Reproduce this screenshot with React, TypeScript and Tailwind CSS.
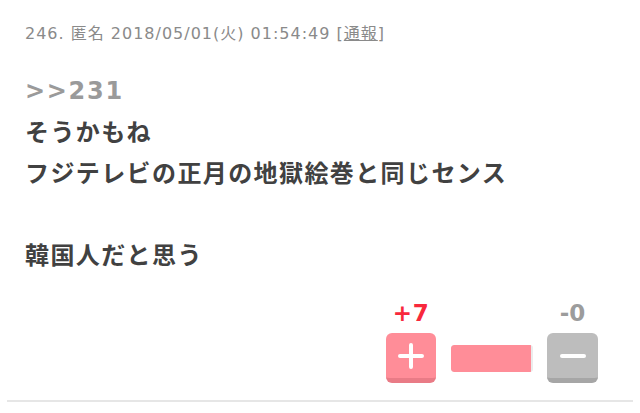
export default function App() {
  const latin = { fontFamily: '"DejaVu Sans", "Noto Sans CJK JP", sans-serif' };
  const body = { fontFamily: '"Noto Sans CJK JP", sans-serif' };
  const up = 7;
  const down = 0;
  const ratio = up + down === 0 ? 0.5 : up / (up + down);

  return (
    <div className="w-[640px] h-[413px] bg-white overflow-hidden">
      <div className="mx-[7px] border-b-2 border-[#e6e6e6] pb-[17px]">
        <div
          className="pl-[18px] pt-[24px] text-[16px] leading-[20px] text-[#8a8a8a] tracking-[1px] whitespace-nowrap"
          style={latin}
        >
          246. 匿名 2018/05/01(火) 01:54:49 [<span className="underline">通報</span>]
        </div>

        <div
          className="pl-[18px] mt-[25px] text-[24px] leading-[41px] font-bold text-[#414141] tracking-[1.4px]"
          style={body}
        >
          <div className="text-[#9a9a9a] tracking-[1.7px] pt-[2px] -mb-[2px]" style={latin}>
            &gt;&gt;231
          </div>
          <div>そうかもね</div>
          <div>フジテレビの正月の地獄絵巻と同じセンス</div>
          <div className="h-[41px]" />
          <div>韓国人だと思う</div>
        </div>

        <div className="mt-[28px] flex justify-end items-end pr-[35px]">
          <div className="flex flex-col items-center w-[50px]">
            <div
              className="text-[23px] leading-[22px] font-bold text-[#f8283c] mb-[9px] pt-[2px] -mt-[2px] tracking-[0.5px]"
              style={latin}
            >
              +{up}
            </div>
            <button className="w-[50px] h-[50px] rounded-[6px] bg-[#ff8d98] border-b-[5px] border-[#e97b86] flex items-center justify-center">
              <svg width="26" height="26" viewBox="0 0 26 26">
                <path d="M13 2v22M2 13h22" stroke="#fff" strokeWidth="4" strokeLinecap="round" />
              </svg>
            </button>
          </div>

          <div className="ml-[15px] mb-[11px] w-[82px] h-[27px] rounded-[3px] bg-[#ececec] overflow-hidden">
            <div className="h-full bg-[#ff8d98] rounded-l-[3px]" style={{ width: `${ratio * 80}px` }} />
          </div>

          <div className="ml-[14px] flex flex-col items-center w-[51px]">
            <div
              className="text-[23px] leading-[22px] font-bold text-[#9c9c9c] mb-[9px] pt-[2px] -mt-[2px]"
              style={latin}
            >
              -{down}
            </div>
            <button className="w-[51px] h-[50px] rounded-[6px] bg-[#bdbdbd] border-b-[5px] border-[#a6a6a6] flex items-center justify-center">
              <svg width="26" height="26" viewBox="0 0 26 26">
                <path d="M2 13h22" stroke="#fff" strokeWidth="4" strokeLinecap="round" />
              </svg>
            </button>
          </div>
        </div>
      </div>
    </div>
  );
}
